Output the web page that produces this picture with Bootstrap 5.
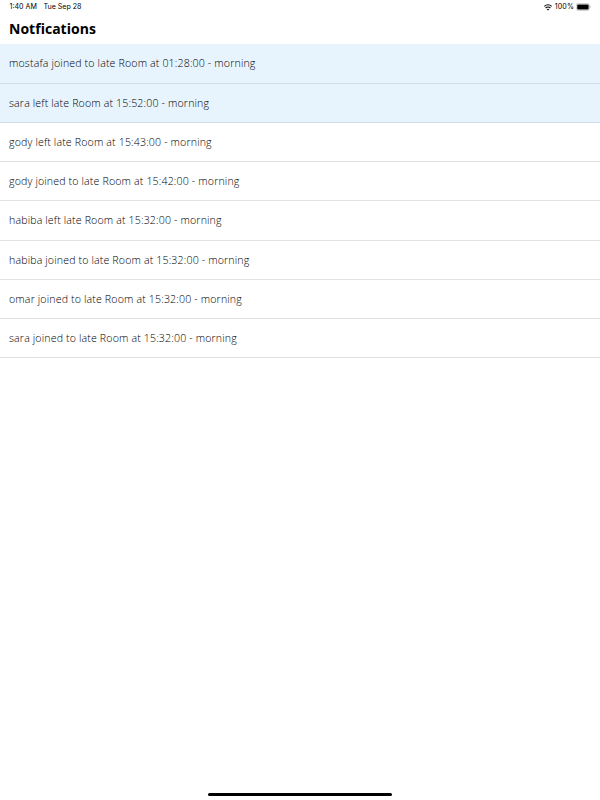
<!DOCTYPE html>
<html lang="en"><head><meta charset="utf-8"><meta name="viewport" content="width=device-width, initial-scale=1"><title>Notfications</title>
<link href="https://cdn.jsdelivr.net/npm/bootstrap@5.3.0/dist/css/bootstrap.min.css" rel="stylesheet">
<style>
body{font-family:"Open Sans",sans-serif;color:#000;height:800px;overflow:hidden}
.status-bar{height:14px;padding:0 9px 0 9.5px;font:400 7.1px/14px Inter,sans-serif;letter-spacing:0}
.status-date{margin-left:6.6px}
.battery-level{margin:0 2px 0 3px;letter-spacing:.1px}
.page-title{height:30.45px;line-height:30px;font-size:14px;font-weight:700;padding-left:9px;letter-spacing:.02px}
.notice{height:39.22px;line-height:38.6px;padding:0 9px;font-size:10.6px;letter-spacing:.152px;font-weight:300;color:#000;border-width:0 0 1px!important;border-color:#e2e2e2}
.notice.unread{background:#e7f4fe;border-color:#cddfe9}
.home-bar{width:184px;height:3px;border-radius:2px;background:#000;margin-bottom:4.5px}
</style></head>
<body class="d-flex flex-column bg-white">
<header class="status-bar d-flex align-items-center"><span>1:40 AM</span><span class="status-date">Tue Sep 28</span>
<svg class="ms-auto" width="8" height="7" viewBox="0 0 8 7" fill="none" stroke="#000" stroke-width="1.1"><path d="M.3 2.4Q4-.9 7.7 2.4M1.6 4Q4 1.9 6.4 4"/><path d="M4 6.5 2.7 5.2Q4 4.2 5.3 5.2Z" fill="#000" stroke="none"/></svg>
<span class="battery-level">100%</span>
<svg width="15" height="8" viewBox="0 0 15 8"><rect x=".3" y=".4" width="13.2" height="7" rx="2" fill="#fff" stroke="#aaa" stroke-width=".6"/><rect x="1.2" y="1.4" width="11.4" height="5" rx="1"/><path d="M14 2.7q1.2 1.2 0 2.4z" fill="#999"/></svg></header>
<h1 class="page-title m-0">Notfications</h1>
<ul class="list-group list-group-flush">
<li class="notice unread list-group-item"><span>mostafa joined to late Room at 01:28:00 - morning</span></li>
<li class="notice unread list-group-item"><span>sara left late Room at 15:52:00 - morning</span></li>
<li class="notice list-group-item"><span>gody left late Room at 15:43:00 - morning</span></li>
<li class="notice list-group-item"><span>gody joined to late Room at 15:42:00 - morning</span></li>
<li class="notice list-group-item"><span>habiba left late Room at 15:32:00 - morning</span></li>
<li class="notice list-group-item"><span>habiba joined to late Room at 15:32:00 - morning</span></li>
<li class="notice list-group-item"><span>omar joined to late Room at 15:32:00 - morning</span></li>
<li class="notice list-group-item"><span>sara joined to late Room at 15:32:00 - morning</span></li>
</ul>
<div class="home-bar mt-auto mx-auto"></div>
<script src="https://cdn.jsdelivr.net/npm/bootstrap@5.3.0/dist/js/bootstrap.bundle.min.js"></script>
</body></html>
